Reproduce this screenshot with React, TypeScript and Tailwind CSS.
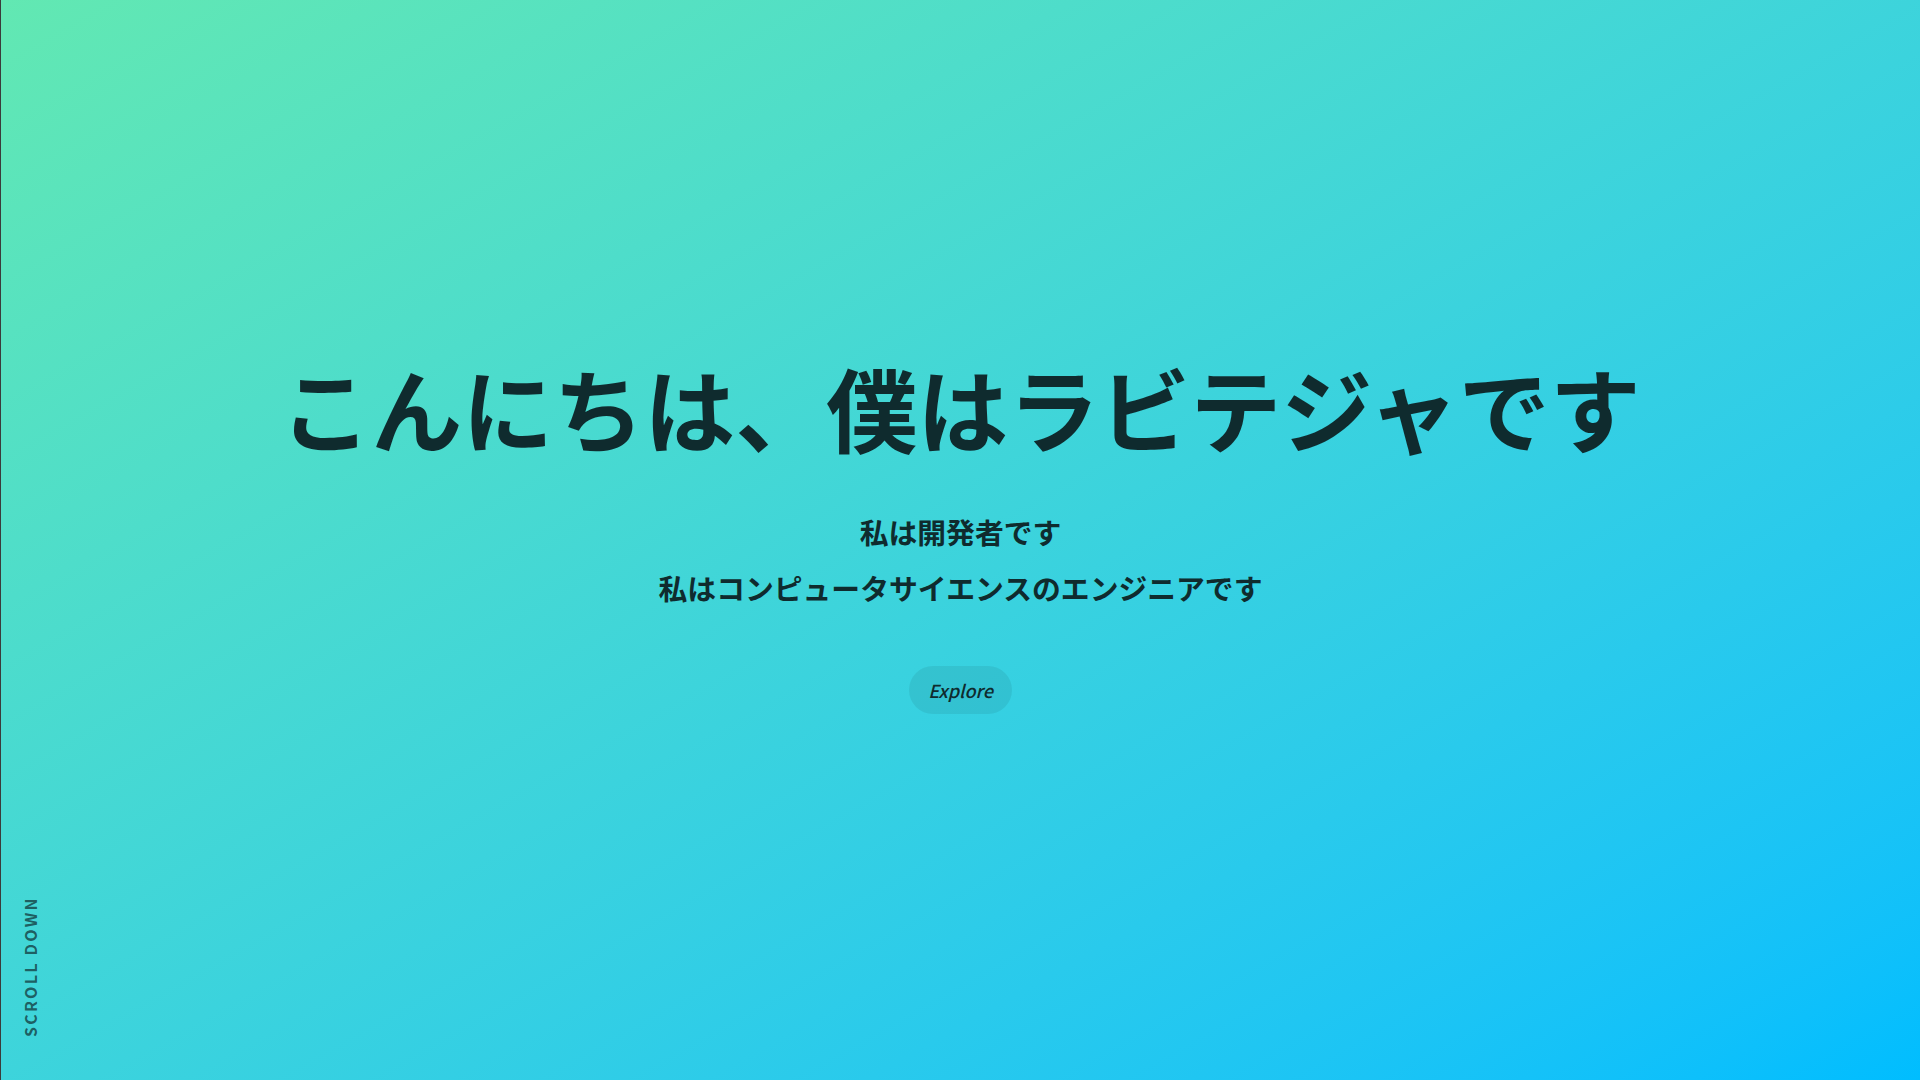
import React from 'react'

const font = { fontFamily: '"Noto Sans CJK JP", "Noto Sans", sans-serif' }

const Hero = () => {
  return (
    <section
      className="relative h-screen w-full overflow-hidden border-l border-[#3b3b3b] bg-gradient-to-br from-[#62e8b2] to-[#00bdff] text-[#0f2b2e]"
      style={font}
    >
      <div className="flex h-full flex-col items-center justify-center pb-5">
        <h1 className="text-[91px] font-bold leading-[120px]">
          こんにちは、僕はラビテジャです
        </h1>
        <div className="mt-[38px] flex flex-col items-center text-[28.8px] font-semibold leading-[56px]">
          <p>私は開発者です</p>
          <p>私はコンピュータサイエンスのエンジニアです</p>
        </div>
        <button className="mt-[50px] h-12 rounded-full bg-black/[0.07] px-[19px] text-lg font-medium italic">
          Explore
        </button>
      </div>

      {/* scroll hint */}
      <div className="absolute bottom-[35px] left-[29px] origin-left -rotate-90">
        <span className="block whitespace-nowrap text-base font-bold leading-none tracking-[0.14em] text-[#0f2b2e]/70">
          SCROLL DOWN
        </span>
      </div>
    </section>
  )
}

export default function App() {
  return <Hero />
}
